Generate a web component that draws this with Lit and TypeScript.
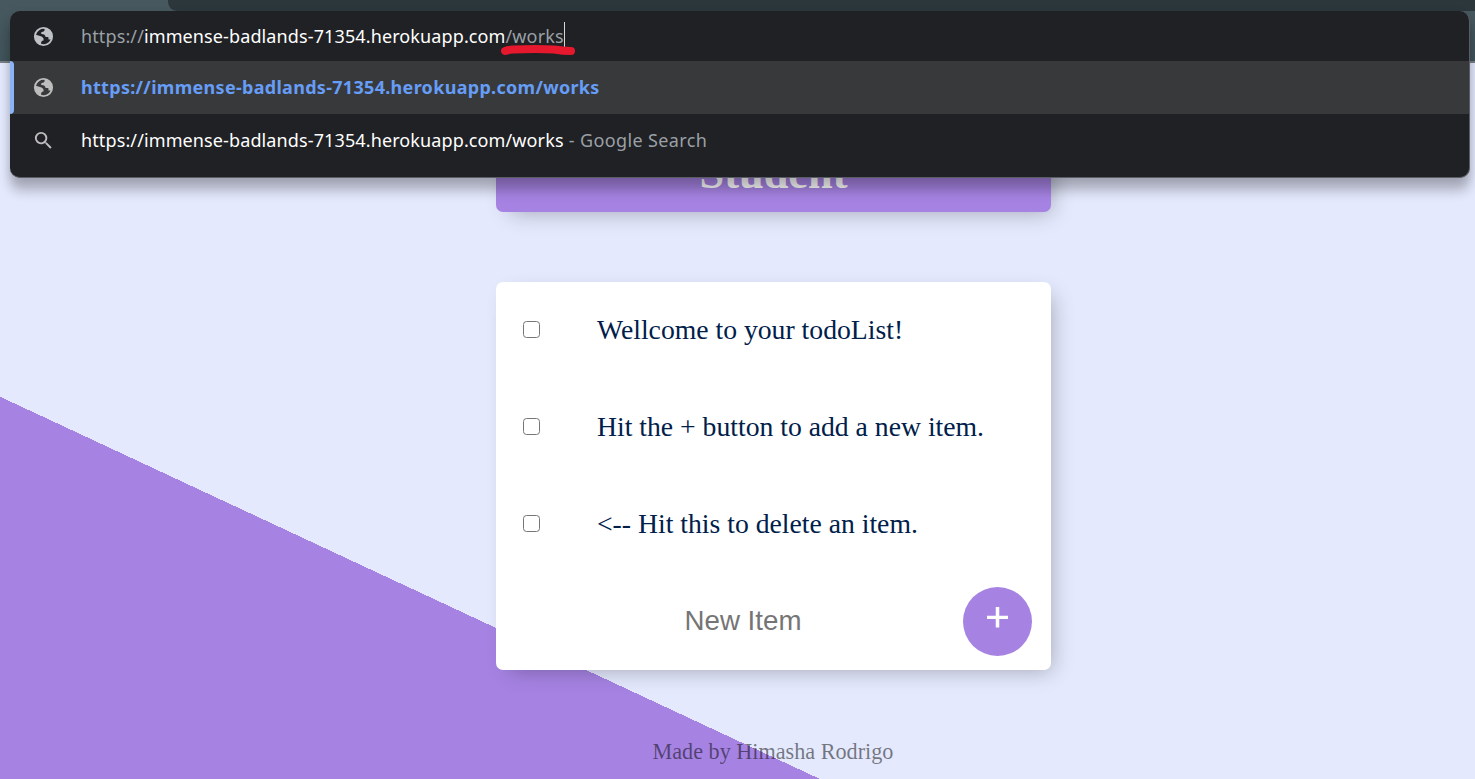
import { LitElement, html, css, svg } from "lit";
import { customElement } from "lit/decorators.js";

const GLOBE = svg`<path fill-rule="evenodd" d="M12 2a10 10 0 1 0 0 20a10 10 0 0 0 0-20zM4.200 10.200A8 8 0 0 1 13.200 4.100C13.400 6 12.400 7.200 9.800 7.300L9.600 9.500C12.200 9.300 14 10.300 14.200 12.600L17 12.600L17.300 15L19.400 15A8 8 0 0 1 9.500 19.600C9.300 17.400 10 16.600 12 16.200C12.800 13.600 10.500 12.300 8.300 11.600z"/>`;

const ITEMS = [
  "Wellcome to your todoList!",
  "Hit the + button to add a new item.",
  "<-- Hit this to delete an item.",
];

@customElement("address-popup")
export class AddressPopup extends LitElement {
  static styles = css`
    :host {
      display: flex;
      flex-direction: column;
      box-sizing: border-box;
      height: 167px;
      border-radius: 10px;
      overflow: hidden;
      background: #202124;
      color: #fff;
      font-family: "Noto Sans", "Open Sans", sans-serif;
      font-size: 18px;
      border-right: 1px solid #5b5c66;
      border-bottom: 1px solid #5b5c66;
    }
    .row {
      display: flex;
      align-items: center;
      flex: none;
      white-space: pre;
      line-height: 26px;
    }
    .input { height: 50px; }
    .hit {
      height: 53px;
      background: #38393b;
      color: #669df6;
      font-weight: 700;
    }
    .search { height: 53px; }
    .bar {
      width: 4px;
      height: 53px;
      margin-right: -4px;
      background: #8ab4f8;
      border-radius: 0 4px 4px 0;
    }
    .icon {
      width: 23px;
      height: 23px;
      margin: 0 26px 0 22px;
      fill: #bdc1c6;
      flex: none;
    }
    .hit .icon { fill: #bdbdbd; }
    .search .icon { fill: #bdbdbd; margin-top: -1px; }
    .hit .bold, .search .url { padding-bottom: 2px; }
    .dim { color: #9aa0a6; }
    .url { letter-spacing: 0.115px; }
    .bold { letter-spacing: 0.300px; }
    .suffix { color: #9aa0a6; letter-spacing: 0.380px; }
    .caret { width: 1px; height: 26px; background: #d5d7da; margin-top: -2px; }
  `;
  render() {
    return html`
      <div class="row input">
        <svg class="icon" viewBox="0 0 24 24">${GLOBE}</svg>
        <span class="url"><span class="dim">https://</span>immense-badlands-71354.herokuapp.com<span class="dim">/works</span></span>
        <span class="caret"></span>
      </div>
      <div class="row hit">
        <span class="bar"></span>
        <svg class="icon" viewBox="0 0 24 24">${GLOBE}</svg>
        <span class="bold">https://immense-badlands-71354.herokuapp.com/works</span>
      </div>
      <div class="row search">
        <svg class="icon" viewBox="0 0 24 24">
          <path d="M15.500 14h-.79l-.28-.27A6.471 6.471 0 0 0 16 9.500 6.500 6.500 0 1 0 9.500 16c1.610 0 3.090-.59 4.230-1.570l.27.28v.79l5 4.990L20.490 19l-4.990-5zm-6 0C7.010 14 5 11.990 5 9.500S7.010 5 9.500 5 14 7.010 14 9.500 11.990 14 9.500 14z"/>
        </svg>
        <span class="url">https://immense-badlands-71354.herokuapp.com/works<span class="suffix"> - Google Search</span></span>
      </div>
    `;
  }
}

@customElement("app-root")
export class AppRoot extends LitElement {
  static styles = css`
    :host {
      display: block;
      position: relative;
      width: 1475px;
      height: 779px;
      overflow: hidden;
      background: linear-gradient(25deg, #a683e3 346.5px, #e4e9fd 346.5px);
      font-family: "Liberation Serif", serif;
    }
    .toolbar {
      height: 61px;
      background: linear-gradient(#47595f, #41545b);
      border-bottom: 2px solid #798086;
      display: flex;
      justify-content: flex-end;
    }
    .tabs {
      width: 1307px;
      height: 11px;
      background: #2c373c;
      border-bottom-left-radius: 9px;
    }
    .page {
      display: flex;
      flex-direction: column;
      align-items: center;
      box-sizing: border-box;
      width: 1475px;
      padding-left: 72px;
    }
    .card {
      width: 555px;
      border-radius: 7px;
      background: #fff;
      box-shadow: 7px 7px 21px -7px rgba(0, 0, 0, 0.3);
    }
    .heading {
      box-sizing: border-box;
      height: 149px;
      padding-top: 85px;
      background: #a683e3;
      text-align: center;
    }
    h1 {
      margin: 0;
      color: #fff;
      font-size: 44.400px;
      line-height: 50px;
    }
    .list { margin-top: 70px; }
    .item {
      display: flex;
      align-items: center;
      height: 97px;
      padding-left: 27px;
    }
    .check {
      box-sizing: border-box;
      width: 17px;
      height: 17px;
      margin: 0 57px 2px 0;
      border: 1.500px solid #767676;
      border-radius: 3.500px;
    }
    .text {
      padding-bottom: 2px;
      color: #00204a;
      font-size: 27.700px;
      line-height: 32px;
    }
    .form {
      display: flex;
      align-items: center;
      height: 97px;
      padding-right: 19px;
    }
    .field {
      flex: 1;
      padding-left: 27px;
      margin-top: -2px;
      color: #757575;
      font: 27.700px/32px "Liberation Sans", sans-serif;
      text-align: center;
    }
    .add {
      display: flex;
      justify-content: center;
      width: 69px;
      height: 69px;
      border-radius: 50%;
      background: #a683e3;
    }
    .add svg { width: 21px; height: 21px; margin-top: 20px; fill: #fff; }
    .footer {
      margin-top: 69px;
      margin-right: 1px;
      color: rgba(0, 0, 0, 0.5);
      font-size: 22.200px;
      line-height: 26px;
    }
    .popup {
      position: absolute;
      left: 10px;
      top: 11px;
      width: 1460px;
      border-radius: 10px;
      box-shadow: 0 13px 12px rgba(0, 0, 0, 0.24), 0 3px 10px rgba(0, 0, 0, 0.1);
    }
    .marker {
      position: absolute;
      left: 498px;
      top: 42px;
      width: 80px;
      height: 16px;
      fill: none;
      stroke: #e5182d;
      stroke-width: 8;
      stroke-linecap: round;
      stroke-linejoin: round;
    }
  `;
  render() {
    return html`
      <div class="toolbar"><div class="tabs"></div></div>
      <main class="page">
        <div class="card heading"><h1>Student</h1></div>
        <div class="card list">
          ${ITEMS.map((t) => html`<div class="item"><span class="check"></span><span class="text">${t}</span></div>`)}
          <div class="form">
            <span class="field">New Item</span>
            <span class="add"><svg viewBox="0 0 21 21"><path d="M8.750 0h3.500v8.700H21v3.300h-8.750v8.500h-3.500V12H0V8.700h8.750z"/></svg></span>
          </div>
        </div>
        <div class="footer">Made by Himasha Rodrigo</div>
      </main>
      <address-popup class="popup"></address-popup>
      <svg class="marker" viewBox="0 0 80 16"><path d="M7 9 Q10 8 15 7.500 Q38 6.500 56 7.500 Q65 9 73 9"/></svg>
    `;
  }
}
